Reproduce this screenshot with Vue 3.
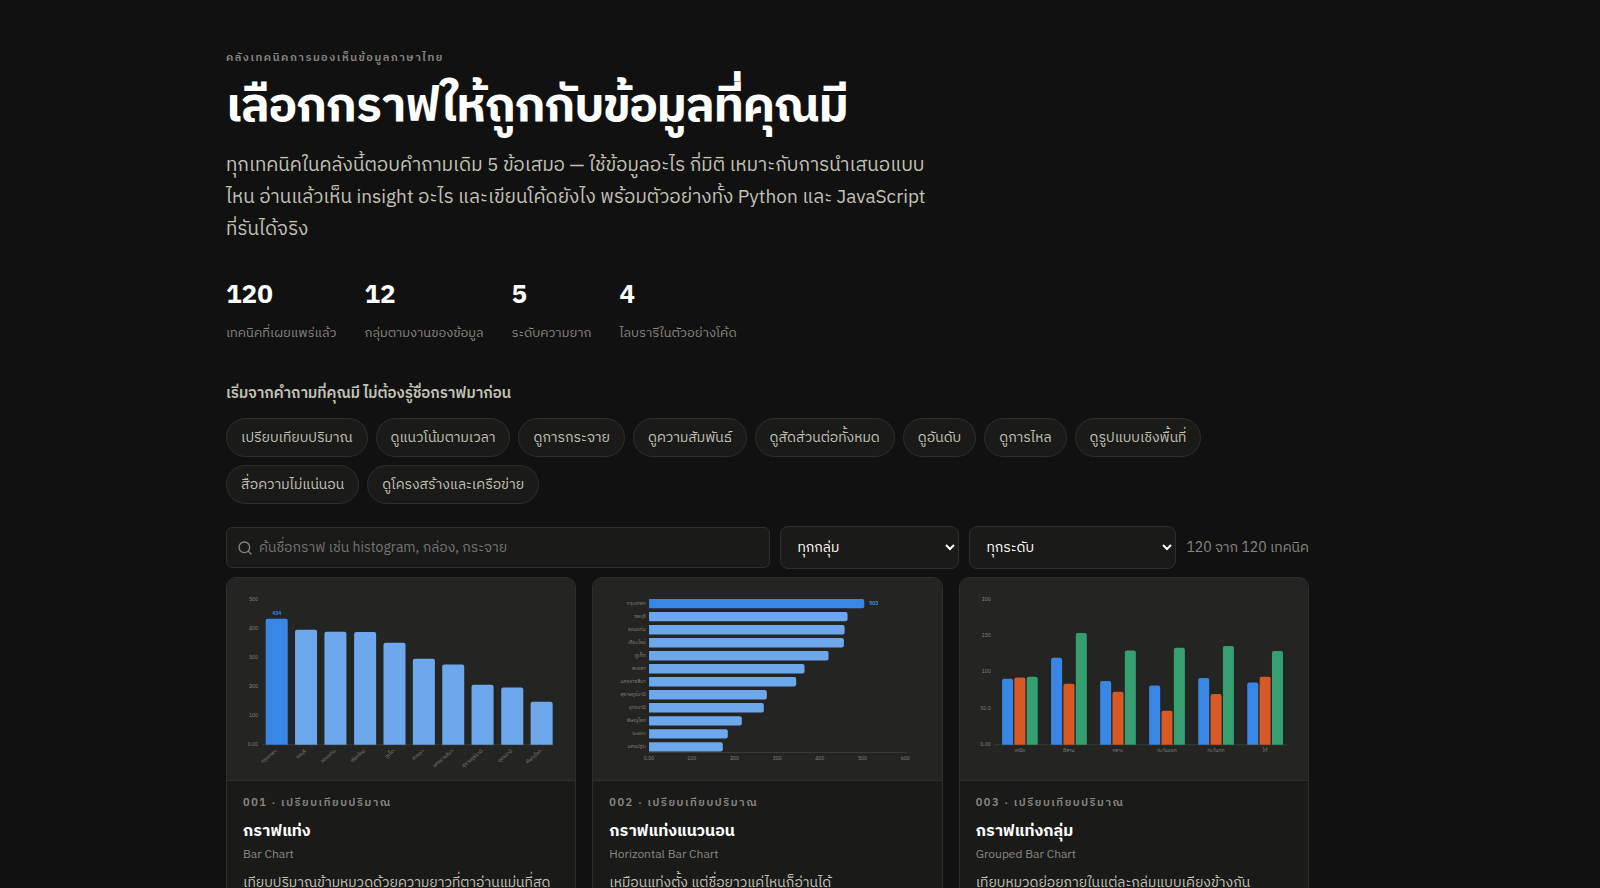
<script setup>
import { ref } from 'vue'

const stats = [
  { value: '120', label: 'เทคนิคที่เผยแพร่แล้ว' },
  { value: '12', label: 'กลุ่มตามงานของข้อมูล' },
  { value: '5', label: 'ระดับความยาก' },
  { value: '4', label: 'ไลบรารีในตัวอย่างโค้ด' },
]

const questions = [
  'เปรียบเทียบปริมาณ',
  'ดูแนวโน้มตามเวลา',
  'ดูการกระจาย',
  'ดูความสัมพันธ์',
  'ดูสัดส่วนต่อทั้งหมด',
  'ดูอันดับ',
  'ดูการไหล',
  'ดูรูปแบบเชิงพื้นที่',
  'สื่อความไม่แน่นอน',
  'ดูโครงสร้างและเครือข่าย',
]

const query = ref('')
const group = ref('ทุกกลุ่ม')
const level = ref('ทุกระดับ')

const provinces = [
  ['กรุงเทพฯ', 434, 503],
  ['ชลบุรี', 396, 464],
  ['ขอนแก่น', 390, 457],
  ['เชียงใหม่', 388, 455],
  ['ภูเก็ต', 352, 419],
  ['สงขลา', 296, 363],
  ['นครราชสีมา', 277, 344],
  ['สุราษฎร์ธานี', 207, 275],
  ['อุดรธานี', 198, 268],
  ['พิษณุโลก', 148, 217],
  ['ระยอง', 0, 184],
  ['นครปฐม', 0, 172],
]

// Vertical bars: baseline at y=500, 87 units per 100
const vertical = provinces.slice(0, 10).map(([name, v], i) => {
  const x = Math.round(116 + i * 88.2)
  const h = Math.round(v * 0.87)
  return { name, x, y: 500 - h, h }
})
const verticalTicks = ['0.00', '100', '200', '300', '400', '500'].map((t, i) => ({ t, y: 504 - i * 87 }))

// Horizontal bars: origin at x=168, 128 units per 100
const horizontal = provinces.map(([name, , v], i) => ({
  name,
  y: 63 + i * 39,
  w: Math.round(v * 1.283),
}))
const horizontalTicks = ['0.00', '100', '200', '300', '400', '500', '600'].map((t, i) => ({ t, x: 168 + i * 128 }))

// Grouped bars: baseline at y=500, 109 units per 50
const series = ['#3987e5', '#d95926', '#359f71']
const regions = [
  ['เหนือ', 91, 93, 94],
  ['อีสาน', 120, 84, 154],
  ['กลาง', 88, 73, 130],
  ['ตะวันออก', 82, 47, 134],
  ['ตะวันตก', 92, 70, 136],
  ['ใต้', 86, 94, 129],
].map(([name, ...values], i) => ({
  name,
  x: 179 + i * 147,
  bars: values.map((v, k) => {
    const h = Math.round(v * 2.175)
    return { x: 126 + i * 147 + k * 37, y: 500 - h, h, fill: series[k] }
  }),
}))
const groupedTicks = ['0.00', '50.0', '100', '150', '200'].map((t, i) => ({ t, y: 504 - i * 109 }))

const cards = [
  { no: '001', title: 'กราฟแท่ง', en: 'Bar Chart', text: 'เทียบปริมาณข้ามหมวดด้วยความยาวที่ตาอ่านแม่นที่สุด' },
  { no: '002', title: 'กราฟแท่งแนวนอน', en: 'Horizontal Bar Chart', text: 'เหมือนแท่งตั้ง แต่ชื่อยาวแค่ไหนก็อ่านได้' },
  { no: '003', title: 'กราฟแท่งกลุ่ม', en: 'Grouped Bar Chart', text: 'เทียบหมวดย่อยภายในแต่ละกลุ่มแบบเคียงข้างกัน' },
]
</script>

<template>
  <div class="page">
    <main class="wrap">
      <header>
        <p class="eyebrow">คลังเทคนิคการมองเห็นข้อมูลภาษาไทย</p>
        <h1>เลือกกราฟให้ถูกกับข้อมูลที่คุณมี</h1>
        <p class="lead">
          ทุกเทคนิคในคลังนี้ตอบคำถามเดิม 5 ข้อเสมอ — ใช้ข้อมูลอะไร กี่มิติ เหมาะกับการนำเสนอแบบไหน
          อ่านแล้วเห็น insight อะไร และเขียนโค้ดยังไง พร้อมตัวอย่างทั้ง Python และ JavaScript ที่รันได้จริง
        </p>
        <dl class="stats">
          <div v-for="s in stats" :key="s.label">
            <dd>{{ s.value }}</dd>
            <dt>{{ s.label }}</dt>
          </div>
        </dl>
      </header>

      <section>
        <h2>เริ่มจากคำถามที่คุณมี ไม่ต้องรู้ชื่อกราฟมาก่อน</h2>
        <div class="chips">
          <button v-for="q in questions" :key="q" type="button">{{ q }}</button>
        </div>
      </section>

      <form class="filters" @submit.prevent>
        <label class="search">
          <svg viewBox="0 0 24 24" aria-hidden="true">
            <circle cx="11" cy="11" r="8" />
            <path d="m21 21-4.3-4.3" />
          </svg>
          <input v-model="query" type="search" aria-label="ค้นหาเทคนิค" placeholder="ค้นชื่อกราฟ เช่น histogram, กล่อง, กระจาย" />
        </label>
        <select v-model="group" class="group" aria-label="กลุ่ม">
          <option>ทุกกลุ่ม</option>
        </select>
        <select v-model="level" class="level" aria-label="ระดับ">
          <option>ทุกระดับ</option>
        </select>
        <span class="count">120 จาก 120 เทคนิค</span>
      </form>

      <div class="grid">
        <article v-for="(c, n) in cards" :key="c.no" class="card">
          <svg v-if="n === 0" class="chart" viewBox="0 0 1044 606" role="img" :aria-label="c.title">
            <line x1="106" x2="980" y1="500" y2="500" class="axis" />
            <text v-for="t in verticalTicks" :key="t.t" x="93" :y="t.y" text-anchor="end">{{ t.t }}</text>
            <g v-for="(b, i) in vertical" :key="b.name">
              <path :d="`M${b.x} 500v${6 - b.h}q0-6 6-6h54q6 0 6 6V500z`" :fill="i ? '#6da7ec' : '#3987e5'" />
              <text :transform="`translate(${b.x + 34} 520) rotate(-40)`" text-anchor="end">{{ b.name }}</text>
            </g>
            <text x="149" y="111" text-anchor="middle" class="value">434</text>
          </svg>
          <svg v-else-if="n === 1" class="chart" viewBox="0 0 1044 606" role="img" :aria-label="c.title">
            <line x1="168" x2="940" y1="523" y2="523" class="axis" />
            <g v-for="(b, i) in horizontal" :key="b.name">
              <path :d="`M168 ${b.y}h${b.w - 6}q6 0 6 6v16q0 6-6 6H168z`" :fill="i ? '#6da7ec' : '#3987e5'" />
              <text x="158" :y="b.y + 17" text-anchor="end">{{ b.name }}</text>
            </g>
            <text v-for="t in horizontalTicks" :key="t.t" :x="t.x" y="546" text-anchor="middle">{{ t.t }}</text>
            <text x="828" y="80" class="value">503</text>
          </svg>
          <svg v-else class="chart" viewBox="0 0 1044 606" role="img" :aria-label="c.title">
            <line x1="104" x2="982" y1="500" y2="500" class="axis" />
            <text v-for="t in groupedTicks" :key="t.t" x="92" :y="t.y" text-anchor="end">{{ t.t }}</text>
            <g v-for="r in regions" :key="r.name">
              <path v-for="b in r.bars" :key="b.x" :d="`M${b.x} 500v${6 - b.h}q0-6 6-6h21q6 0 6 6V500z`" :fill="b.fill" />
              <text :x="r.x" y="523" text-anchor="middle">{{ r.name }}</text>
            </g>
          </svg>
          <div class="body">
            <p class="tag">{{ c.no }} · เปรียบเทียบปริมาณ</p>
            <h3>{{ c.title }}</h3>
            <p class="en">{{ c.en }}</p>
            <p class="text">{{ c.text }}</p>
          </div>
        </article>
      </div>
    </main>
  </div>
</template>

<style>
body {
  margin: 0;
  background: #111;
}
</style>

<style scoped>
.page {
  box-sizing: border-box;
  height: 100vh;
  overflow: hidden;
  padding: 48px 65px 0 0;
  background: #111;
  color: #fff;
  font-family: 'IBM Plex Sans Thai', 'Noto Sans Thai', 'Noto Sans', sans-serif;
}
.wrap {
  max-width: 1083px;
  margin: 0 auto;
}
p, h1, h2, h3, dl, dd { margin: 0; }
.eyebrow {
  color: #898781;
  font-size: 11px;
  font-weight: 600;
  line-height: 20px;
  letter-spacing: 0.14em;
}
h1 {
  margin-top: 10px;
  font-size: 48px;
  font-weight: 700;
  line-height: 58px;
  letter-spacing: -0.02em;
}
.lead {
  max-width: 700px;
  margin-top: 14px;
  color: #c3c2b7;
  font-size: 19px;
  line-height: 32px;
}
.stats {
  display: flex;
  gap: 28px;
  margin-top: 28px;
}
.stats > div {
  display: flex;
  flex-direction: column;
}
.stats dd {
  font-size: 26px;
  font-weight: 700;
  line-height: 44px;
}
.stats dt {
  color: #898781;
  font-size: 13px;
  line-height: 22px;
  margin-top: 4px;
}
h2 {
  margin-top: 36px;
  color: #c3c2b7;
  font-size: 15px;
  font-weight: 600;
  line-height: 28px;
}
.chips {
  display: flex;
  flex-wrap: wrap;
  gap: 8px;
  margin-top: 10px;
}
.chips button {
  padding: 6px 14px;
  border: 1px solid #2e2e2c;
  border-radius: 999px;
  background: #1a1a19;
  color: #c3c2b7;
  font: inherit;
  font-size: 14px;
  line-height: 25px;
}
.filters {
  display: flex;
  align-items: center;
  gap: 10px;
  margin-top: 22px;
}
.search {
  display: flex;
  flex: 1;
  align-items: center;
  box-sizing: border-box;
  height: 41px;
  padding: 0 10px;
  gap: 6px;
  border: 1px solid #2e2e2c;
  border-radius: 6px;
  background: #1a1a19;
}
.search svg {
  width: 16px;
  height: 16px;
  fill: none;
  stroke: #898781;
  stroke-width: 2;
  stroke-linecap: round;
}
.search input {
  flex: 1;
  min-width: 0;
  padding: 0;
  border: 0;
  outline: 0;
  background: none;
  color: #fff;
  font: inherit;
  font-size: 14px;
}
.search input::placeholder { color: #757575; }
select {
  box-sizing: border-box;
  height: 43px;
  padding: 0 0 0 12px;
  border: 1px solid #2e2e2c;
  border-radius: 8px;
  background: #1a1a19;
  color: #fff;
  color-scheme: dark;
  font: inherit;
  font-size: 14px;
}
.group { width: 179px; }
.level { width: 207px; }
.count {
  color: #898781;
  font-size: 14px;
}
.grid {
  display: grid;
  grid-template-columns: repeat(3, 1fr);
  gap: 16px;
  margin-top: 8px;
}
.card {
  overflow: hidden;
  border: 1px solid #2e2e2c;
  border-radius: 10px;
  background: #1a1a19;
}
.chart {
  display: block;
  width: 100%;
  border-bottom: 1px solid #2e2e2c;
  background: #242422;
}
.chart text {
  fill: #898781;
  font-size: 15px;
}
.chart .value {
  fill: #3987e5;
  font-weight: 700;
}
.axis {
  stroke: #383835;
  stroke-width: 3;
}
.body { padding: 12px 16px 16px; }
.tag {
  color: #898781;
  font-size: 11px;
  font-weight: 600;
  line-height: 20px;
  letter-spacing: 0.14em;
}
h3 {
  margin-top: 5px;
  font-size: 16px;
  font-weight: 700;
  line-height: 27px;
}
.en {
  color: #898781;
  font-size: 12px;
  line-height: 20px;
}
.text {
  margin-top: 7px;
  color: #c3c2b7;
  font-size: 14px;
  line-height: 22px;
}
</style>
